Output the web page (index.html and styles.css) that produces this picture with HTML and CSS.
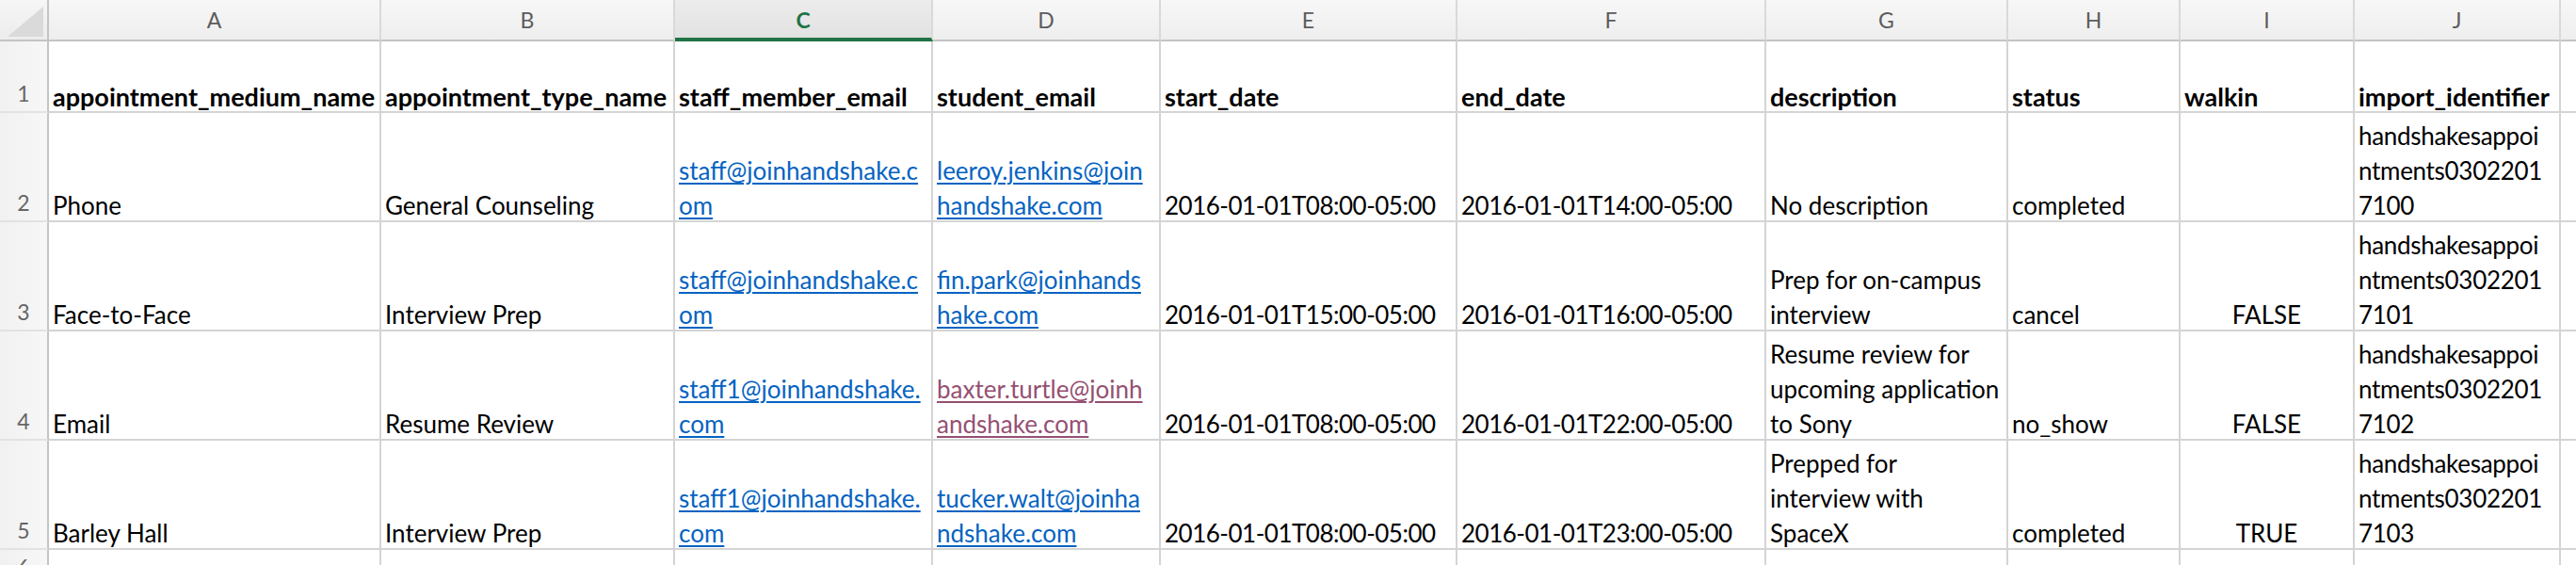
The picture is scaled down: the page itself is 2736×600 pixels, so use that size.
FILE: index.html
```html
<!DOCTYPE html>
<html lang="en">
<head>
    <meta charset="UTF-8">
    <meta name="viewport" content="width=device-width, initial-scale=1.0">
    <title>appointments.csv</title>
    <link rel="stylesheet" href="styles.css">
</head>
<body>
    <div class="sheet">
        <!-- column letters -->
        <div class="corner"><div class="corner-tri"></div></div>
        <div class="col-head">A</div>
        <div class="col-head">B</div>
        <div class="col-head selected">C</div>
        <div class="col-head">D</div>
        <div class="col-head">E</div>
        <div class="col-head">F</div>
        <div class="col-head">G</div>
        <div class="col-head">H</div>
        <div class="col-head">I</div>
        <div class="col-head">J</div>
        <div class="col-head last"></div>

        <!-- row 1 -->
        <div class="row-head">1</div>
        <div class="cell bold"><span>appointment_medium_name</span></div>
        <div class="cell bold"><span>appointment_type_name</span></div>
        <div class="cell bold"><span>staff_member_email</span></div>
        <div class="cell bold"><span>student_email</span></div>
        <div class="cell bold"><span>start_date</span></div>
        <div class="cell bold"><span>end_date</span></div>
        <div class="cell bold"><span>description</span></div>
        <div class="cell bold"><span>status</span></div>
        <div class="cell bold"><span>walkin</span></div>
        <div class="cell bold"><span>import_identifier</span></div>
        <div class="cell last"></div>

        <!-- row 2 -->
        <div class="row-head">2</div>
        <div class="cell"><span>Phone</span></div>
        <div class="cell"><span>General Counseling</span></div>
        <div class="cell"><span><a href="#">staff@joinhandshake.c<br>om</a></span></div>
        <div class="cell"><span><a href="#">leeroy.jenkins@join<br>handshake.com</a></span></div>
        <div class="cell date"><span>2016-01-01T08:00-05:00</span></div>
        <div class="cell date"><span>2016-01-01T14:00-05:00</span></div>
        <div class="cell"><span>No description</span></div>
        <div class="cell"><span>completed</span></div>
        <div class="cell center"><span></span></div>
        <div class="cell ident"><span>handshakesappoi<br>ntments0302201<br>7100</span></div>
        <div class="cell last"></div>

        <!-- row 3 -->
        <div class="row-head">3</div>
        <div class="cell"><span>Face-to-Face</span></div>
        <div class="cell"><span>Interview Prep</span></div>
        <div class="cell"><span><a href="#">staff@joinhandshake.c<br>om</a></span></div>
        <div class="cell"><span><a href="#">fin.park@joinhands<br>hake.com</a></span></div>
        <div class="cell date"><span>2016-01-01T15:00-05:00</span></div>
        <div class="cell date"><span>2016-01-01T16:00-05:00</span></div>
        <div class="cell"><span>Prep for on-campus<br>interview</span></div>
        <div class="cell"><span>cancel</span></div>
        <div class="cell center"><span>FALSE</span></div>
        <div class="cell ident"><span>handshakesappoi<br>ntments0302201<br>7101</span></div>
        <div class="cell last"></div>

        <!-- row 4 -->
        <div class="row-head">4</div>
        <div class="cell"><span>Email</span></div>
        <div class="cell"><span>Resume Review</span></div>
        <div class="cell"><span><a href="#">staff1@joinhandshake.<br>com</a></span></div>
        <div class="cell"><span><a href="#" class="visited">baxter.turtle@joinh<br>andshake.com</a></span></div>
        <div class="cell date"><span>2016-01-01T08:00-05:00</span></div>
        <div class="cell date"><span>2016-01-01T22:00-05:00</span></div>
        <div class="cell"><span>Resume review for<br>upcoming application<br>to Sony</span></div>
        <div class="cell"><span>no_show</span></div>
        <div class="cell center"><span>FALSE</span></div>
        <div class="cell ident"><span>handshakesappoi<br>ntments0302201<br>7102</span></div>
        <div class="cell last"></div>

        <!-- row 5 -->
        <div class="row-head">5</div>
        <div class="cell"><span>Barley Hall</span></div>
        <div class="cell"><span>Interview Prep</span></div>
        <div class="cell"><span><a href="#">staff1@joinhandshake.<br>com</a></span></div>
        <div class="cell"><span><a href="#">tucker.walt@joinha<br>ndshake.com</a></span></div>
        <div class="cell date"><span>2016-01-01T08:00-05:00</span></div>
        <div class="cell date"><span>2016-01-01T23:00-05:00</span></div>
        <div class="cell"><span>Prepped for<br>interview with<br>SpaceX</span></div>
        <div class="cell"><span>completed</span></div>
        <div class="cell center"><span>TRUE</span></div>
        <div class="cell ident"><span>handshakesappoi<br>ntments0302201<br>7103</span></div>
        <div class="cell last"></div>

        <!-- row 6 -->
        <div class="row-head top">6</div>
        <div class="cell"></div>
        <div class="cell"></div>
        <div class="cell"></div>
        <div class="cell"></div>
        <div class="cell"></div>
        <div class="cell"></div>
        <div class="cell"></div>
        <div class="cell"></div>
        <div class="cell"></div>
        <div class="cell"></div>
        <div class="cell last"></div>
    </div>
</body>
</html>
```

FILE: styles.css
```css
body {
    margin: 0;
    background-color: #fff;
    font-family: Lato, "Open Sans", sans-serif;
    overflow: hidden;
}
.sheet {
    display: grid;
    grid-template-columns: 52px 353px 312px 274px 242px 315px 328px 257px 183px 185px 219px 1fr;
    grid-template-rows: 44px 76px 116px 116px 116px 116px 40px;
    width: 2736px;
    height: 600px;
    overflow: hidden;
}
.corner {
    background: linear-gradient(#f6f6f6, #ececec);
    border-right: 2px solid #c4c4c4;
    border-bottom: 2px solid #c4c4c4;
    display: flex;
    justify-content: flex-end;
    align-items: flex-end;
    padding: 0 4px 3px 0;
}
.corner-tri {
    width: 38px;
    height: 32px;
    background-color: #dadada;
    clip-path: polygon(0 100%, 100% 100%, 100% 0);
}
.col-head {
    background: linear-gradient(#f7f7f7, #eeeeee);
    border-right: 2px solid #d9d9d9;
    border-bottom: 2px solid #c4c4c4;
    color: #5c5c5c;
    font-size: 23px;
    display: flex;
    justify-content: center;
    align-items: center;
}
.col-head.selected {
    background: linear-gradient(#ececec, #e2e2e2);
    border-bottom: 4px solid #217346;
    color: #217346;
    font-weight: bold;
    padding-top: 2px;
}
.col-head.last {
    border-right: none;
}
.row-head {
    background: linear-gradient(to right, #f1f1f1, #f7f7f7);
    border-right: 2px solid #c4c4c4;
    border-bottom: 2px solid #e2e2e2;
    color: #666;
    font-size: 23px;
    display: flex;
    justify-content: center;
    align-items: flex-end;
    padding-bottom: 5px;
}
.row-head.top {
    align-items: flex-start;
    padding: 4px 0 0 0;
}
.cell {
    border-right: 2px solid #d4d4d4;
    border-bottom: 2px solid #d4d4d4;
    font-size: 26px;
    line-height: 37px;
    color: #000;
    white-space: nowrap;
    overflow: hidden;
    display: flex;
    flex-direction: column;
    justify-content: flex-end;
    padding-left: 4px;
}
.cell span {
    display: block;
    margin-bottom: -3px;
}
.cell.bold {
    font-size: 27px;
    font-weight: bold;
}
.cell.date {
    letter-spacing: -0.5px;
}
.cell.ident {
    letter-spacing: -0.3px;
}
.cell.center {
    text-align: center;
    padding-left: 0;
}
.cell.last {
    border-right: none;
}
.cell a {
    color: #0563c1;
    text-decoration: underline;
    text-decoration-thickness: 2px;
    text-underline-offset: 3px;
}
.cell a.visited {
    color: #954f72;
}
```
